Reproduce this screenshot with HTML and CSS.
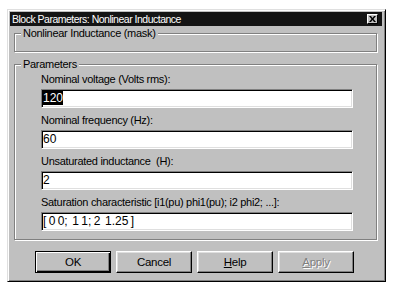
FILE: index.html
```html
<!DOCTYPE html>
<html>
<head>
<meta charset="utf-8">
<link rel="stylesheet" href="styles.css">
</head>
<body>
<div class="window">
  <div class="titlebar">
    <span class="title">Block Parameters: Nonlinear Inductance</span>
    <span class="close"><svg width="7" height="6" viewBox="0 0 7 6"><path d="M0 0h2l1.5 2 1.5-2h2l-2.5 3 2.5 3h-2l-1.5-2-1.5 2h-2l2.5-3z" fill="#000"/></svg></span>
  </div>
  <fieldset class="group mask">
    <legend>Nonlinear Inductance (mask)</legend>
  </fieldset>
  <fieldset class="group params">
    <legend>Parameters</legend>
    <div class="fields">
      <div class="label">Nominal voltage (Volts rms):</div>
      <div class="field"><span class="sel">120</span></div>
      <div class="label">Nominal frequency (Hz):</div>
      <div class="field">60</div>
      <div class="label">Unsaturated inductance  (H):</div>
      <div class="field">2</div>
      <div class="label">Saturation characteristic [i1(pu) phi1(pu); i2 phi2; ...]:</div>
      <div class="field">[ 0 0;  1 1; 2  1.25 ]</div>
    </div>
  </fieldset>
  <div class="buttons">
    <div class="btn default">OK</div>
    <div class="btn">Cancel</div>
    <div class="btn"><u>H</u>elp</div>
    <div class="btn disabled"><u>A</u>pply</div>
  </div>
</div>
</body>
</html>
```
FILE: styles.css
```css
html, body {
  margin: 0;
  padding: 0;
  background: #fff;
}
body {
  font-family: "Liberation Sans", Arial, sans-serif;
  font-size: 11px;
  letter-spacing: -0.3px;
  color: #000;
}
.window {
  margin: 9px 0 0 7px;
  width: 379px;
  height: 273px;
  box-sizing: border-box;
  background: #c0c0c0;
  border: 1px solid;
  border-color: #dfdfdf #000 #000 #dfdfdf;
  box-shadow: inset 1px 1px 0 #fff, inset -1px -1px 0 #808080;
  padding: 2px 2px 2px 2px;
}
.titlebar {
  height: 14px;
  margin-right: 1px;
  background: #141414;
  color: #fff;
  display: flex;
  align-items: center;
  justify-content: space-between;
  padding-left: 2px;
  line-height: 14px;
}
.title {
  white-space: nowrap;
  font-size: 10.5px;
  letter-spacing: -0.5px;
}
.close {
  width: 11px;
  height: 10px;
  box-sizing: border-box;
  background: #c0c0c0;
  border: 1px solid;
  border-color: #fff #000 #000 #fff;
  margin-right: 4px;
  display: flex;
  align-items: center;
  justify-content: center;
}
.close svg {
  display: block;
}
.group {
  margin: 0 0 0 4px;
  width: 363px;
  box-sizing: border-box;
  border: 1px solid #808080;
  box-shadow: 1px 1px 0 #fff, inset 1px 1px 0 #fff;
  padding: 0 0 0 6px;
  min-width: 0;
}
.group legend {
  padding: 0 2px;
  line-height: 13px;
  background: #c0c0c0;
  white-space: nowrap;
}
.mask {
  margin-top: 1px;
  height: 25px;
}
.params {
  margin-top: 6px;
  height: 182px;
}
.fields {
  padding: 2px 0 0 20px;
}
.label {
  line-height: 13px;
  height: 13px;
  margin-bottom: 3px;
  white-space: pre;
}
.field {
  width: 312px;
  height: 19px;
  box-sizing: border-box;
  background: #fff;
  border: 1px solid;
  border-color: #808080 #fff #fff #808080;
  box-shadow: inset 1px 1px 0 #000, inset -1px -1px 0 #dfdfdf;
  padding: 0 0 0 1px;
  font-size: 12px;
  letter-spacing: 0;
  word-spacing: -1px;
  line-height: 17px;
  white-space: pre;
  margin-bottom: 6px;
}
.sel {
  background: #000;
  color: #fff;
}
.buttons {
  display: flex;
  gap: 5px;
  margin: 11px 0 0 25px;
}
.btn {
  width: 76px;
  height: 22px;
  box-sizing: border-box;
  border: 1px solid;
  border-color: #fff #000 #000 #fff;
  box-shadow: inset -1px -1px 0 #808080, inset 1px 1px 0 #dfdfdf;
  display: flex;
  align-items: center;
  justify-content: center;
  font-size: 11.5px;
}
.btn.default {
  border-color: #000;
  box-shadow: inset 1px 1px 0 #fff, inset -1px -1px 0 #000, inset -2px -2px 0 #808080;
}
.btn.disabled {
  color: #808080;
  text-shadow: 1px 1px 0 #fff;
}
```
